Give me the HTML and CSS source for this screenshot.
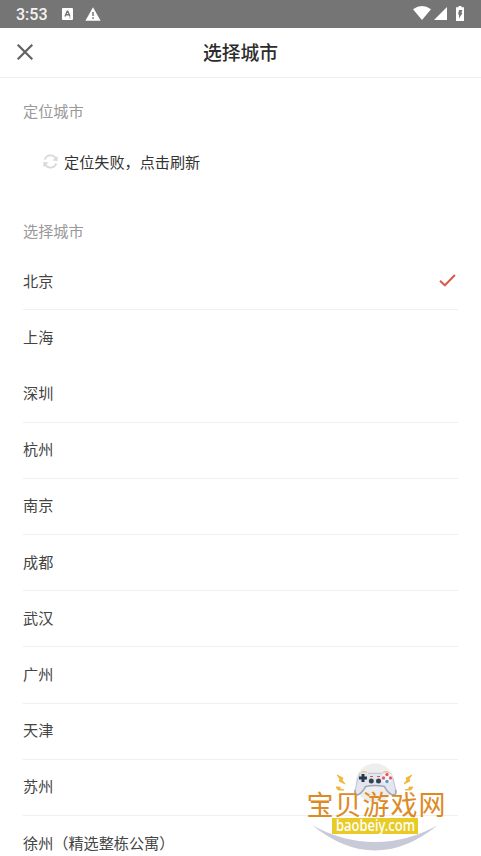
FILE: index.html
```html
<!DOCTYPE html>
<html lang="zh-CN">
<head>
<meta charset="utf-8">
<title>选择城市</title>
<link rel="stylesheet" href="styles.css">
</head>
<body>
<div class="screen">
  <div class="status">
    <span class="time">3:53</span>
    <svg class="app" width="11" height="12" viewBox="0 0 11 12"><rect width="11" height="12" rx="1" fill="#fff"/><path d="M3 8.500 5.200 3.200h.6L8 8.500M3.800 6.800h3.400" fill="none" stroke="#757575" stroke-width="1.400"/><path d="M7 10h2" stroke="#999" stroke-width=".7"/></svg>
    <svg class="warn" width="16" height="14" viewBox="0 0 16 14"><path d="M8 .3 15.600 13.700H.4z" fill="#fff"/><path d="M8 5v4M8 10.300v1.600" stroke="#757575" stroke-width="1.500"/></svg>
    <svg class="wifi" width="18" height="14" viewBox="0 0 18 14"><path d="M0 3.200Q9-3 18 3.200L9 14z" fill="#fff"/></svg>
    <svg class="signal" width="13" height="13" viewBox="0 0 13 13"><path d="M13 0v13H0z" fill="#fff"/></svg>
    <svg class="battery" width="8" height="15" viewBox="0 0 8 15"><path d="M2.500 0h3v1.300H8V15H0V1.300h2.500z" fill="#fff"/><path d="M3 4h3.300L5.500 7h1L3 12.500V8.500H2z" fill="#757575"/></svg>
  </div>
  <header class="header">
    <svg class="close" width="16" height="16" viewBox="0 0 16 16"><path d="M.7.7l14.600 14.600M15.300.7.7 15.300" stroke="#626262" stroke-width="2.200"/></svg>
    <h1>选择城市</h1>
  </header>
  <main>
    <h2 class="label">定位城市</h2>
    <div class="locate">
      <svg width="16" height="16" viewBox="0 0 16 16"><path d="M1.800 6A6.500 6.500 0 0 1 13.500 4.500M14.200 10A6.500 6.500 0 0 1 2.500 11.500" fill="none" stroke="#d9d9d9" stroke-width="1.800"/><path d="M15.600 2V7.500L10 7zM.4 14V8.500L6 9z" fill="#d9d9d9"/></svg>
      <span>定位失败，点击刷新</span>
    </div>
    <h2 class="label choose">选择城市</h2>
    <ul class="cities">
      <li>北京<svg width="17" height="13" viewBox="0 0 17 13"><path d="M1 6.700 5.900 11.300 15.900 1" fill="none" stroke="#d95b4c" stroke-width="2"/></svg></li>
      <li class="plain">上海</li>
      <li>深圳</li>
      <li>杭州</li>
      <li>南京</li>
      <li>成都</li>
      <li>武汉</li>
      <li>广州</li>
      <li>天津</li>
      <li>苏州</li>
      <li>徐州（精选整栋公寓）</li>
    </ul>
  </main>
  <svg class="watermark" width="155" height="101" viewBox="0 0 155 101">
    <circle cx="75" cy="28" r="19.500" fill="#eeeeef"/>
    <path d="M12 70Q75 121 138 70Q108 87 75 87Q42 87 12 70z" fill="#c9cad8"/>
    <path d="M60 18Q64 15.500 68 18H82Q86 15.500 90 18Q94 22 96 36Q96 41 92 39.500Q87 37 84.500 31.500Q75 29 65.500 31.500Q63 37 58 39.500Q54 41 55 36Q57 22 60 18z" fill="#e4e6ef"/>
    <path d="M55.300 34.500Q54 41.500 58.500 39.500Q63 37 65.500 31.500Q75 29.500 84.500 31.500Q87 37 91.500 39.500Q97 41.500 95.700 34.500" fill="none" stroke="#a3a6ba" stroke-width="1.700"/>
    <path d="M60 18Q57 24 55.500 34M90 18Q94 24 95.500 34M68 18.300H82" fill="none" stroke="#b6b9c9" stroke-width=".8"/>
    <path d="M61 17.300Q64 15.800 67 17.300M83 17.300Q86 15.800 89 17.300" fill="none" stroke="#edb95b" stroke-width="1"/>
    <path d="M59 23h8M63 19v8" stroke="#26384c" stroke-width="3"/>
    <circle cx="71.300" cy="26" r="2.500" fill="#344354"/><circle cx="78.500" cy="26" r="2.500" fill="#344354"/>
    <path d="M70 21.500h3M77 21.500h3" stroke="#d95756" stroke-width="1.200"/>
    <circle cx="87" cy="23" r="5.300" fill="#f6f7fc"/>
    <circle cx="87" cy="19.500" r="1.700" fill="#e55d65"/><circle cx="90.500" cy="23" r="1.700" fill="#e55d65"/><circle cx="87" cy="26.500" r="1.700" fill="#5298c5"/><circle cx="83.500" cy="23" r="1.700" fill="#e55d65"/>
    <path d="M37 20 43 23 42 25 45 29 39 26 40 24zM36 32 40 32 40 34 44 35 38 35zM112 20 106 23 107 25 104 29 110 26 109 24zM113 32 109 32 109 34 105 35 111 35z" fill="#f6bd28" stroke="#e9a82c" stroke-width=".7"/>
    <text class="site" x="6.500" y="59.500" textLength="139" lengthAdjust="spacing">宝贝游戏网</text>
    <rect x="32" y="63" width="86" height="16" fill="#e9cb28"/>
    <text class="domain" x="36" y="75.500" textLength="79" lengthAdjust="spacingAndGlyphs">baobeiy.com</text>
  </svg>
</div>
</body>
</html>
```
FILE: styles.css
```css
* { box-sizing: border-box; }
body { margin: 0; background: #fff; font-family: "Noto Sans CJK SC", sans-serif; }
.screen { position: relative; height: 856px; overflow: hidden; }
.status { height: 27.500px; background: #757575; display: flex; align-items: center; padding: 0 17px 0 16px; }
.time { font: 500 16px/28px Roboto, sans-serif; color: #f4f4f4; width: 46px; padding-top: 2px; }
.warn { margin-left: 12px; }
.wifi { margin-left: auto; margin-top: -2px; }
.signal { margin-left: 3px; }
.battery { margin-left: 9px; margin-top: -1px; }
.header { height: 50px; border-bottom: 1px solid #eee; display: grid; grid-template-columns: 60px 1fr 60px; align-items: center; }
.close { margin-left: 17px; }
.header h1 { margin: 0; font-size: 18.750px; line-height: 28px; font-weight: 500; color: #2c2c2c; text-align: center; }
main { padding: 21px 23px 0; }
.label { margin: 0; font-size: 15.150px; line-height: 22px; font-weight: 400; color: #999; }
.locate { display: flex; align-items: center; gap: 6px; height: 22px; margin: 29px 0 47px 20px; font-size: 15.150px; line-height: 22px; color: #333; }
.locate svg { width: 15px; height: 15px; margin-top: 2px; }
.cities { list-style: none; margin: 13.600px 0 0; padding: 0; }
.cities li { height: 56.200px; padding-bottom: 4px; display: flex; align-items: center; justify-content: space-between; border-bottom: 1px solid #f0f0f0; font-size: 15.150px; line-height: 22px; color: #444; }
.cities .plain { border-color: transparent; }
.cities svg { margin: 2px 2px 0 0; }
.watermark { position: absolute; left: 300px; top: 755px; }
.site { font-size: 27px; font-weight: 400; fill: #dd8a25; }
.domain { font: 500 15.500px "Noto Sans", sans-serif; fill: #fff; }
```
